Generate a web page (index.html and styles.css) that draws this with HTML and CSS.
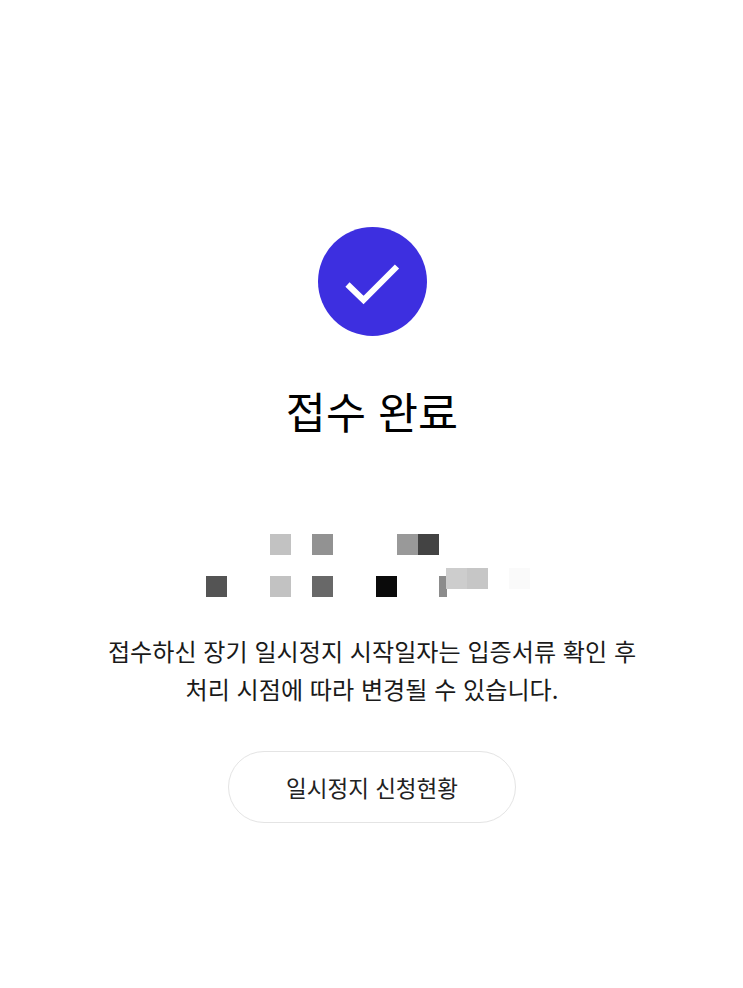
FILE: index.html
```html
<!DOCTYPE html>
<html lang="ko">
    <head>
        <meta charset="UTF-8" />
        <meta name="viewport" content="width=device-width, initial-scale=1.0" />
        <title>접수 완료</title>
        <link rel="stylesheet" href="styles.css">
    </head>
    <body>
        <main class="page">
            <div class="checkCircle">
                <svg width="109" height="109" viewBox="0 0 109 109">
                    <path d="M29.5 57.5L45.5 73L79 39.5" fill="none" stroke="#fff" stroke-width="6" />
                </svg>
            </div>
            <h1 class="title">접수 완료</h1>

            <!-- blurred personal details -->
            <div class="mosaic">
                <span class="cell c4 light"></span>
                <span class="cell c6 mid"></span>
                <span class="cell c10 midLight"></span>
                <span class="cell c11 dark"></span>
                <span class="cell c1 row2 darkish"></span>
                <span class="cell c4 row2 light"></span>
                <span class="cell c6 row2 midDark"></span>
                <span class="cell c9 row2 black"></span>
                <span class="cell c12 row2 sliver"></span>
                <span class="smear"></span>
                <span class="smearFaint"></span>
            </div>

            <p class="notice">
                접수하신 장기 일시정지 시작일자는 입증서류 확인 후<br />
                처리 시점에 따라 변경될 수 있습니다.
            </p>
            <button class="statusBtn">일시정지 신청현황</button>
        </main>
    </body>
</html>
```

FILE: styles.css
```css
* {
    margin: 0;
    padding: 0;
    box-sizing: border-box;
}
html,
body {
    width: 100%;
    height: 100%;
    background-color: white;
}
body {
    font-family: "Noto Sans CJK KR", "Noto Sans", sans-serif;
    color: #111;
}
.page {
    display: flex;
    flex-direction: column;
    align-items: center;
    padding-top: 227px;
    padding-left: 1px;
}
.checkCircle {
    width: 109px;
    height: 109px;
    border-radius: 50%;
    background-color: #3d2fe0;
    & > svg {
        display: block;
    }
}
.title {
    margin-top: 43px;
    font-size: 43.5px;
    font-weight: 400;
    line-height: 64px;
    color: #000;
}
.mosaic {
    position: relative;
    align-self: flex-start;
    margin-top: 91px;
    margin-left: 205px;
    width: 254px;
    display: grid;
    grid-template-columns: repeat(12, 21.2px);
    grid-template-rows: 21px 21px;
    row-gap: 21px;
}
.cell {
    grid-row: 1;
    height: 21px;
}
.row2 {
    grid-row: 2;
}
.c1 { grid-column: 1; }
.c4 { grid-column: 4; }
.c6 { grid-column: 6; }
.c9 { grid-column: 9; }
.c10 { grid-column: 10; }
.c11 { grid-column: 11; }
.c12 { grid-column: 12; width: 8px; background-color: #8c8c8c; }
.light { background-color: #c2c2c2; }
.mid { background-color: #929292; }
.midLight { background-color: #999; }
.dark { background-color: #434343; }
.darkish { background-color: #545454; }
.midDark { background-color: #686868; }
.black { background-color: #0a0a0a; }
.smear {
    position: absolute;
    left: 240px;
    top: 34px;
    width: 42px;
    height: 21px;
    background: linear-gradient(to right, #cdcdcd 50%, #c6c6c6 50%);
}
.smearFaint {
    position: absolute;
    left: 303px;
    top: 34px;
    width: 21px;
    height: 21px;
    background-color: #fafafa;
}
.notice {
    margin-top: 35px;
    font-size: 24.1px;
    line-height: 38px;
    text-align: center;
    color: #1a1a1a;
}
.statusBtn {
    margin-top: 43px;
    width: 288px;
    height: 72px;
    border: 1.5px solid #e4e4e4;
    border-radius: 36px;
    background-color: white;
    font-family: inherit;
    font-size: 22.5px;
    color: #222;
}
```
